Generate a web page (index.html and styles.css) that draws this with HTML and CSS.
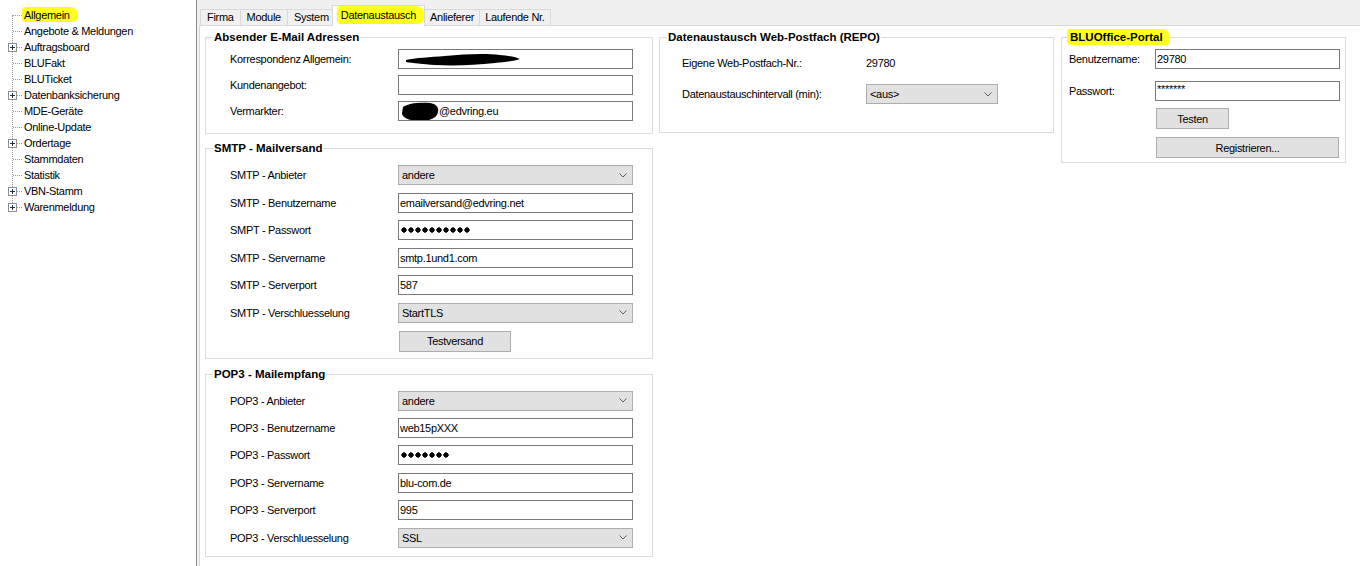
FILE: index.html
```html
<!DOCTYPE html>
<html lang="de">

<head>
    <meta charset="utf-8">
    <title>Einstellungen - Datenaustausch</title>
    <link rel="stylesheet" href="styles.css">
</head>

<body>
    <div class="app">
        <!-- navigation tree -->
        <div class="tree">
            <ul class="tree-list">
                <li class="tree-item"><span class="marker marker-tree">Allgemein</span></li>
                <li class="tree-item">Angebote &amp; Meldungen</li>
                <li class="tree-item"><span class="tree-plus"></span>Auftragsboard</li>
                <li class="tree-item">BLUFakt</li>
                <li class="tree-item">BLUTicket</li>
                <li class="tree-item"><span class="tree-plus"></span>Datenbanksicherung</li>
                <li class="tree-item">MDE-Geräte</li>
                <li class="tree-item">Online-Update</li>
                <li class="tree-item"><span class="tree-plus"></span>Ordertage</li>
                <li class="tree-item">Stammdaten</li>
                <li class="tree-item">Statistik</li>
                <li class="tree-item"><span class="tree-plus"></span>VBN-Stamm</li>
                <li class="tree-item"><span class="tree-plus"></span>Warenmeldung</li>
            </ul>
        </div>

        <div class="main">
            <!-- tabs -->
            <div class="tabs">
                <div class="tab tab-wide">Firma</div>
                <div class="tab tab-wide">Module</div>
                <div class="tab tab-wide">System</div>
                <div class="tab tab-active"><span class="marker marker-tab">Datenaustausch</span></div>
                <div class="tab">Anlieferer</div>
                <div class="tab">Laufende Nr.</div>
            </div>

            <!-- tab page -->
            <div class="page">
                <div class="col col-mail">
                    <fieldset class="group">
                        <legend>Absender E-Mail Adressen</legend>
                        <div class="group-body body-mail">
                            <div class="row">
                                <span class="label">Korrespondenz Allgemein:</span>
                                <div class="field">
                                    <svg class="blob blob-a" width="116" height="13" viewBox="0 0 116 13">
                                        <path d="M1,7 C10,5 25,4 40,3 C60,1 80,0 95,2 C105,3 112,4 115,6 C110,8 100,9 90,10 C70,12 50,13 30,12 C18,11 8,10 1,9 Z" fill="#000"/>
                                    </svg>
                                </div>
                            </div>
                            <div class="row">
                                <span class="label">Kundenangebot:</span>
                                <div class="field"></div>
                            </div>
                            <div class="row">
                                <span class="label">Vermarkter:</span>
                                <div class="field">
                                    <svg class="blob" width="39" height="19" viewBox="0 0 39 19">
                                        <path d="M3,5 C8,1 20,0 30,1 C37,2 39,6 38,10 C37,15 32,19 20,19 C10,19 2,16 2,11 Z" fill="#000"/>
                                    </svg>@edvring.eu
                                </div>
                            </div>
                        </div>
                    </fieldset>

                    <fieldset class="group group-smtp">
                        <legend>SMTP - Mailversand</legend>
                        <div class="group-body body-smtp">
                            <div class="row">
                                <span class="label">SMTP - Anbieter</span>
                                <div class="select">andere<svg class="chevron" width="8" height="5" viewBox="0 0 8 5"><polyline points="0.5,0.5 4,4 7.5,0.5" fill="none" stroke="#606060"/></svg></div>
                            </div>
                            <div class="row">
                                <span class="label">SMTP - Benutzername</span>
                                <div class="field">emailversand@edvring.net</div>
                            </div>
                            <div class="row">
                                <span class="label">SMPT - Passwort</span>
                                <div class="field"><span class="dots" style="width: 70px"></span></div>
                            </div>
                            <div class="row">
                                <span class="label">SMTP - Servername</span>
                                <div class="field">smtp.1und1.com</div>
                            </div>
                            <div class="row">
                                <span class="label">SMTP - Serverport</span>
                                <div class="field">587</div>
                            </div>
                            <div class="row">
                                <span class="label">SMTP - Verschluesselung</span>
                                <div class="select">StartTLS<svg class="chevron" width="8" height="5" viewBox="0 0 8 5"><polyline points="0.5,0.5 4,4 7.5,0.5" fill="none" stroke="#606060"/></svg></div>
                            </div>
                            <div class="row">
                                <span class="label"></span>
                                <div class="btn btn-test">Testversand</div>
                            </div>
                        </div>
                    </fieldset>

                    <fieldset class="group group-pop">
                        <legend>POP3 - Mailempfang</legend>
                        <div class="group-body body-pop">
                            <div class="row">
                                <span class="label">POP3 - Anbieter</span>
                                <div class="select">andere<svg class="chevron" width="8" height="5" viewBox="0 0 8 5"><polyline points="0.5,0.5 4,4 7.5,0.5" fill="none" stroke="#606060"/></svg></div>
                            </div>
                            <div class="row">
                                <span class="label">POP3 - Benutzername</span>
                                <div class="field">web15pXXX</div>
                            </div>
                            <div class="row">
                                <span class="label">POP3 - Passwort</span>
                                <div class="field"><span class="dots" style="width: 49px"></span></div>
                            </div>
                            <div class="row">
                                <span class="label">POP3 - Servername</span>
                                <div class="field">blu-com.de</div>
                            </div>
                            <div class="row">
                                <span class="label">POP3 - Serverport</span>
                                <div class="field">995</div>
                            </div>
                            <div class="row">
                                <span class="label">POP3 - Verschluesselung</span>
                                <div class="select">SSL<svg class="chevron" width="8" height="5" viewBox="0 0 8 5"><polyline points="0.5,0.5 4,4 7.5,0.5" fill="none" stroke="#606060"/></svg></div>
                            </div>
                        </div>
                    </fieldset>
                </div>

                <div class="col col-repo">
                    <fieldset class="group">
                        <legend>Datenaustausch Web-Postfach (REPO)</legend>
                        <div class="group-body body-repo">
                            <div class="row">
                                <span class="label">Eigene Web-Postfach-Nr.:</span>
                                <span class="value">29780</span>
                            </div>
                            <div class="row">
                                <span class="label">Datenaustauschintervall (min):</span>
                                <div class="select">&lt;aus&gt;<svg class="chevron" width="8" height="5" viewBox="0 0 8 5"><polyline points="0.5,0.5 4,4 7.5,0.5" fill="none" stroke="#606060"/></svg></div>
                            </div>
                        </div>
                    </fieldset>
                </div>

                <div class="col col-portal">
                    <fieldset class="group">
                        <legend><span class="marker marker-legend">BLUOffice-Portal</span></legend>
                        <div class="group-body body-portal">
                            <div class="row">
                                <span class="label">Benutzername:</span>
                                <div class="field">29780</div>
                            </div>
                            <div class="row row-pass">
                                <span class="label">Passwort:</span>
                                <div class="field field-stars">*******</div>
                            </div>
                            <div class="row row-testen">
                                <span class="label"></span>
                                <div class="btn btn-testen">Testen</div>
                            </div>
                            <div class="row row-register">
                                <span class="label"></span>
                                <div class="btn btn-register">Registrieren...</div>
                            </div>
                        </div>
                    </fieldset>
                </div>
            </div>
        </div>
    </div>
</body>

</html>
```

FILE: styles.css
```css
/* ===== */
/* Base  */
/* ===== */
* {
    box-sizing: border-box;
}
body {
    margin: 0;
    font: normal 11px 'Liberation Sans', Arial, sans-serif;
    letter-spacing: -0.3px;
    color: #000000;
    background-color: #f0f0f0;
}

.app {
    display: flex;
    height: 566px;
    overflow: hidden;
}

/* highlighter strokes */
.marker {
    background-color: #ffff1e;
    border-radius: 3px 8px 6px 3px;
}

/* ==== */
/* Tree */
/* ==== */
.tree {
    width: 197px;
    flex: none;
    background-color: #ffffff;
    border-right: 1px solid #8c8c8c;
    padding-top: 7px;
}

.tree-list {
    list-style: none;
    margin: 0;
    padding: 0;
    position: relative;
}
.tree-list::before {
    content: "";
    position: absolute;
    left: 12px;
    top: 8px;
    bottom: 8px;
    border-left: 1px dotted #a0a0a0;
}

.tree-item {
    position: relative;
    height: 16px;
    line-height: 16px;
    padding-left: 24px;
    white-space: nowrap;
}
.tree-item::before {
    content: "";
    position: absolute;
    left: 13px;
    top: 8px;
    width: 9px;
    border-top: 1px dotted #a0a0a0;
}

.tree-plus {
    position: absolute;
    left: 8px;
    top: 4px;
    width: 9px;
    height: 9px;
    border: 1px solid #919191;
    background:
        linear-gradient(#1f2f44, #1f2f44) center / 5px 1px no-repeat,
        linear-gradient(#1f2f44, #1f2f44) center / 1px 5px no-repeat,
        #ffffff;
    z-index: 1;
}

.marker-tree {
    padding: 2px 8px 1px 2px;
    margin-left: -2px;
}

/* ==== */
/* Tabs */
/* ==== */
.main {
    flex: 1;
    display: flex;
    flex-direction: column;
    padding-left: 2px;
}

.tabs {
    display: flex;
    align-items: flex-end;
    height: 25px;
    flex: none;
    padding-left: 1px;
}

.tab {
    height: 16px;
    line-height: 14px;
    padding: 0 5px;
    border: 1px solid #d9d9d9;
    border-bottom: 0;
    margin-right: -1px;
    background-color: #f0f0f0;
    white-space: nowrap;
}
.tab-wide {
    padding: 0 6px;
}

.tab-active {
    position: relative;
    z-index: 1;
    height: 21px;
    line-height: 18px;
    margin: 0 -1px -1px -3px;
    padding: 0 8px 0 8px;
    background-color: #ffffff;
}

.marker-tab {
    display: inline-block;
    line-height: 18px;
    padding: 0 8px 0 4px;
    margin: 0 -8px 0 -4px;
}

/* ======== */
/* Tab page */
/* ======== */
.page {
    flex: 1;
    display: flex;
    align-items: flex-start;
    gap: 6px;
    padding: 5px 0 0 5px;
    background-color: #ffffff;
    border-top: 1px solid #d9d9d9;
    border-left: 1px solid #d9d9d9;
}

.col {
    display: flex;
    flex-direction: column;
}
.col-mail {
    width: 448px;
}
.col-repo {
    width: 395px;
}
.col-portal {
    width: 285px;
    margin-left: 1px;
}

.group {
    margin: 0;
    padding: 0;
    min-width: 0;
    border: 1px solid #dcdcdc;
}
.group legend {
    font-weight: bold;
    font-size: 11.5px;
    line-height: 13px;
    letter-spacing: 0;
    padding: 0 1px;
    margin-left: 7px;
}

.group-body {
    display: flex;
    flex-direction: column;
}

.row {
    display: flex;
    align-items: center;
}
.label {
    flex: none;
    white-space: nowrap;
}

/* inputs */
.field,
.select {
    height: 20px;
    display: flex;
    align-items: center;
    white-space: nowrap;
    overflow: hidden;
}
.field {
    border: 1px solid #7a7a7a;
    padding: 0 1px;
    background-color: #ffffff;
}
.select {
    justify-content: space-between;
    border: 1px solid #adadad;
    background-color: #e1e1e1;
    padding-left: 3px;
}
.chevron {
    margin-right: 5px;
    flex: none;
}

.btn {
    height: 21px;
    display: flex;
    align-items: center;
    justify-content: center;
    border: 1px solid #adadad;
    background-color: #e1e1e1;
}

.blob {
    flex: none;
}
.blob-a {
    margin-left: 5px;
    margin-top: 1px;
}

.dots {
    display: inline-block;
    height: 6px;
    margin-left: 1px;
    background: radial-gradient(circle at 3px 3px, #000000 2.4px, transparent 2.9px) 0 0 / 7px 6px repeat-x;
}

/* E-Mail */
.body-mail {
    padding: 5px 19px 12px 24px;
    gap: 6px;
}
.body-mail .label,
.body-smtp .label,
.body-pop .label {
    width: 168px;
}
.body-mail .field,
.body-smtp .field,
.body-smtp .select,
.body-pop .field,
.body-pop .select {
    width: 235px;
}

.group-smtp {
    margin-top: 8px;
}
.body-smtp {
    padding: 10px 0 6px 24px;
    gap: 7.6px;
}
.btn-test {
    width: 112px;
    margin-left: 1px;
}

.group-pop {
    margin-top: 9px;
}
.body-pop {
    padding: 10px 0 8px 24px;
    gap: 7.4px;
}

/* REPO */
.body-repo {
    padding: 9px 0 28px 22px;
    gap: 11px;
}
.body-repo .row {
    height: 20px;
}
.body-repo .label {
    width: 184px;
}
.body-repo .select {
    width: 132px;
}

/* Portal */
.marker-legend {
    padding: 2px 6px 2px 3px;
    margin-left: -3px;
    border-radius: 2px 6px 3px 4px;
}
.body-portal {
    padding: 5px 5px 4px 7px;
}
.body-portal .label {
    width: 86px;
}
.body-portal .field {
    width: 185px;
}
.field-stars {
    align-items: flex-start;
    padding-top: 1px;
}
.row-pass {
    margin-top: 12px;
}
.row-testen {
    margin-top: 7px;
}
.row-register {
    margin-top: 8px;
}
.btn-testen {
    width: 73px;
    margin-left: 1px;
}
.btn-register {
    width: 183px;
    margin-left: 1px;
}
```
